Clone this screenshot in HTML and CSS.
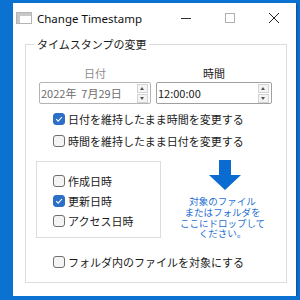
FILE: index.html
```html
<!DOCTYPE html>
<html lang="ja">
<head>
  <meta charset="UTF-8" />
  <title>Change Timestamp</title>
  <link rel="stylesheet" href="styles.css">
</head>
<body>
  <div class="window">
    <div class="titlebar">
      <svg class="app-icon" width="16" height="12" viewBox="0 0 16 12">
        <rect x="0.5" y="0.5" width="15" height="11" fill="#fff" stroke="#b4b4b4"/>
        <rect x="1" y="1" width="14" height="3" fill="#c8c8c8"/>
        <rect x="1" y="4" width="3" height="7" fill="#c8c8c8"/>
      </svg>
      <span class="title">Change Timestamp</span>
      <div class="caption">
        <span class="cap"><svg width="10" height="10" viewBox="0 0 10 10"><path d="M0 5.5 H10" stroke="#333" stroke-width="1"/></svg></span>
        <span class="cap"><svg width="10" height="10" viewBox="0 0 10 10"><rect x="0.5" y="0.5" width="9" height="9" fill="none" stroke="#b0b0b0"/></svg></span>
        <span class="cap"><svg width="10" height="10" viewBox="0 0 10 10"><path d="M0 0 L10 10 M10 0 L0 10" stroke="#222" stroke-width="1"/></svg></span>
      </div>
    </div>

    <fieldset class="group">
      <legend>タイムスタンプの変更</legend>

      <div class="pickers">
        <div class="picker date">
          <div class="picker-label disabled">日付</div>
          <div class="picker-box disabled">
            <span class="value">2022年&nbsp; 7月29日</span>
            <span class="spin"><i class="up"></i><i class="down"></i></span>
          </div>
        </div>
        <div class="picker time">
          <div class="picker-label">時間</div>
          <div class="picker-box">
            <span class="value">12:00:00</span>
            <span class="spin"><i class="up"></i><i class="down"></i></span>
          </div>
        </div>
      </div>

      <div class="mode">
        <label class="check checked"><span class="box"><svg width="12" height="12" viewBox="0 0 12 12"><path d="M3.2 6.2 L5.2 8.2 L8.9 4" fill="none" stroke="#fff" stroke-width="1.1"/></svg></span>日付を維持したまま時間を変更する</label>
        <label class="check"><span class="box"></span>時間を維持したまま日付を変更する</label>
      </div>

      <div class="lower">
        <div class="targets">
          <label class="check"><span class="box"></span>作成日時</label>
          <label class="check checked"><span class="box"><svg width="12" height="12" viewBox="0 0 12 12"><path d="M3.2 6.2 L5.2 8.2 L8.9 4" fill="none" stroke="#fff" stroke-width="1.1"/></svg></span>更新日時</label>
          <label class="check"><span class="box"></span>アクセス日時</label>
        </div>
        <div class="drop">
          <svg class="arrow" width="32" height="30" viewBox="0 0 32 30">
            <path d="M10 0 H22 V15 H32 L16 30 L0 15 H10 Z" fill="#0a6cd0"/>
          </svg>
          <p>対象のファイル<br>またはフォルダを<br>ここにドロップして<br>ください。</p>
        </div>
      </div>

      <label class="check folder"><span class="box"></span>フォルダ内のファイルを対象にする</label>
    </fieldset>
  </div>
</body>
</html>
```

FILE: styles.css
```css
body {
  margin: 0;
  background-color: #0c72d2;
  font-family: "Noto Sans CJK JP", "Noto Sans", sans-serif;
  color: #1a1a1a;
  font-size: 11px;
}
.window {
  width: 283px;
  height: 293px;
  margin: 3px 0 0 13px;
  background-color: #fff;
  display: flex;
  flex-direction: column;
  box-shadow: 1px 1px 2px rgba(0,0,0,0.35);
}

/* title bar */
.titlebar {
  height: 30px;
  display: flex;
  align-items: center;
  padding-left: 3px;
}
.app-icon {
  margin-right: 5px;
}
.title {
  font-family: "Noto Sans", sans-serif;
  font-size: 11.5px;
  color: #111;
  flex: 1;
}
.caption {
  display: flex;
}
.cap {
  width: 44px;
  height: 30px;
  display: flex;
  align-items: center;
  justify-content: center;
}

/* group box */
.group {
  margin: 4px 9px 0 12px;
  padding: 0 0 9px 0;
  border: 1px solid #dcdcdc;
  min-width: 0;
}
.group legend {
  margin-left: 8px;
  padding: 0 3px;
  line-height: 14px;
  font-size: 11px;
}

/* date / time pickers */
.pickers {
  display: flex;
  gap: 5px;
  margin: 15px 0 0 13px;
}
.picker-label {
  text-align: center;
  line-height: 14px;
  margin-bottom: 2px;
}
.picker-label.disabled {
  color: #8c8c8c;
}
.date .picker-box {
  width: 109px;
}
.time .picker-box {
  width: 113px;
}
.picker-box {
  height: 20px;
  border: 1px solid #a0a0a0;
  border-radius: 2px;
  display: flex;
  align-items: center;
  justify-content: space-between;
  padding-left: 1px;
}
.picker-box.disabled {
  border-color: #b4b4b4;
  color: #6d6d6d;
}
.spin {
  display: flex;
  flex-direction: column;
  gap: 1px;
  margin-right: 2px;
}
.spin i {
  width: 9px;
  height: 7px;
  border: 1px solid #d4d4d4;
  background-color: #f4f4f4;
  position: relative;
}
.spin i::after {
  content: "";
  position: absolute;
  left: 2px;
  border-left: 2.5px solid transparent;
  border-right: 2.5px solid transparent;
}
.spin .up::after {
  top: 2px;
  border-bottom: 3px solid #555;
}
.spin .down::after {
  top: 2px;
  border-top: 3px solid #555;
}

/* checkboxes */
.check {
  display: flex;
  align-items: center;
  height: 22px;
  white-space: nowrap;
}
.check .box {
  width: 10px;
  height: 10px;
  border: 1px solid #6f6f6f;
  border-radius: 3px;
  background-color: #f4f4f4;
  margin-right: 3px;
  display: flex;
}
.check.checked .box {
  background-color: #2d6fc6;
  border-color: #2d6fc6;
}
.check.checked .box svg {
  margin: -1px;
}
.mode {
  margin: 4px 0 0 27px;
}

.lower {
  display: flex;
  margin-top: 9px;
}
.targets {
  width: 107px;
  height: 66px;
  margin-left: 10px;
  border: 1px solid #dcdcdc;
  padding: 9px 0 0 16px;
}
.targets .check {
  height: 20px;
}
.drop {
  flex: 1;
  display: flex;
  flex-direction: column;
  align-items: center;
  padding-left: 2px;
}
.drop .arrow {
  margin-top: -1px;
}
.drop p {
  margin: 6px 0 0 -4px;
  font-size: 9.5px;
  line-height: 10.8px;
  text-align: center;
  color: #1f6fd2;
}
.folder {
  margin: 12px 0 0 27px;
}
```
